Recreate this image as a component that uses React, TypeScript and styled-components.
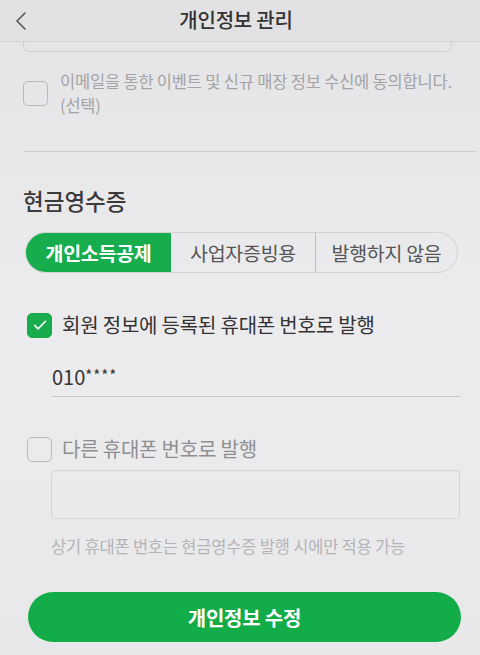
import styled, { createGlobalStyle } from 'styled-components';

const GlobalStyle = createGlobalStyle`
  body {
    margin: 0;
    background: #e7e7e9;
    font-family: 'Noto Sans CJK KR', 'Noto Sans', sans-serif;
  }
`;

const Page = styled.div`
  width: 480px;
  min-height: 655px;
  background: linear-gradient(180deg, #e4e4e6 0%, #e9e9eb 30%, #ececee 55%, #e8e8ea 100%);
  overflow: hidden;
`;

const Header = styled.header`
  height: 42px;
  display: grid;
  grid-template-columns: 44px 1fr 44px;
  align-items: center;
  background: #e2e2e4;
  border-bottom: 1px solid #d3d3d5;
  box-sizing: border-box;
`;

const BackButton = styled.button`
  border: none;
  background: none;
  padding: 0 0 0 14px;
  display: flex;
  align-items: center;
  color: #555;
`;

const Title = styled.h1`
  margin: 0 8px 2px 0;
  text-align: center;
  font-size: 20px;
  line-height: 28px;
  font-weight: 500;
  color: #333;
  letter-spacing: -0.2px;
`;

const Content = styled.main`
  padding: 0 4px 0 23px;
`;

const FieldStub = styled.div`
  height: 9px;
  margin-right: 24px;
  border: 1px solid #cfcfd1;
  border-top: none;
  border-radius: 0 0 6px 6px;
`;

const CheckRow = styled.label<{ $top: number; $indent?: number }>`
  display: flex;
  align-items: center;
  gap: 10px;
  margin-top: ${p => p.$top}px;
  margin-left: ${p => p.$indent ?? 0}px;
`;

const Box = styled.span<{ $checked?: boolean }>`
  flex: none;
  width: 25px;
  height: 25px;
  box-sizing: border-box;
  border-radius: 5px;
  border: 1.5px solid ${p => (p.$checked ? '#17a84a' : '#b9b9bb')};
  background: ${p => (p.$checked ? '#17ad4c' : 'transparent')};
  display: flex;
  align-items: center;
  justify-content: center;
`;

const AgreeText = styled.span`
  font-size: 16.5px;
  line-height: 24px;
  color: #a3a3a5;
  letter-spacing: -0.2px;
  white-space: nowrap;
  margin-left: 2px;
`;

const Divider = styled.hr`
  margin: 34px 0 0;
  border: none;
  border-top: 1px solid #cdcdcf;
`;

const SectionTitle = styled.h2`
  margin: 34px 0 0;
  font-size: 22.5px;
  line-height: 28px;
  font-weight: 500;
  color: #3a3a3a;
`;

const Segment = styled.div`
  margin: 18px 18px 0 2px;
  height: 41px;
  display: grid;
  grid-template-columns: 145px 144px 1fr;
  border: 1px solid #d2d2d4;
  border-radius: 21px;
  overflow: hidden;
  box-sizing: border-box;
`;

const SegmentItem = styled.button<{ $active?: boolean; $divided?: boolean }>`
  border: none;
  border-left: ${p => (p.$divided ? '1px solid #bdbdbf' : 'none')};
  background: ${p => (p.$active ? '#18ad4c' : 'transparent')};
  color: ${p => (p.$active ? '#fff' : '#555')};
  font-family: inherit;
  font-size: 19.5px;
  font-weight: ${p => (p.$active ? 700 : 400)};
  padding: 0 0 1px;
  letter-spacing: -0.3px;
  white-space: nowrap;
`;

const IssueText = styled.span<{ $muted?: boolean }>`
  font-size: 20px;
  line-height: 26px;
  color: ${p => (p.$muted ? '#8e8e90' : '#333')};
  letter-spacing: -0.2px;
  white-space: nowrap;
`;

const Indented = styled.div`
  margin: 0 16px 0 28px;
`;

const PhoneValue = styled.div`
  margin-top: 24px;
  padding: 0 0 6px 1px;
  font-size: 20px;
  line-height: 26px;
  color: #333;
  border-bottom: 1px solid #c9c9cb;

  sup {
    font-size: 15px;
    vertical-align: 4px;
    letter-spacing: 1px;
  }
`;

const PhoneInput = styled.input`
  display: block;
  width: 100%;
  height: 49px;
  margin-top: 8px;
  box-sizing: border-box;
  border: 1px solid #d3d3d5;
  border-radius: 4px;
  background: transparent;
`;

const Helper = styled.p`
  margin: 15px 0 0;
  font-size: 16.5px;
  line-height: 24px;
  color: #b4b4b6;
  letter-spacing: -0.2px;
  white-space: nowrap;
`;

const SubmitButton = styled.button`
  display: block;
  width: 433px;
  height: 50px;
  margin: 34px 0 0 5px;
  border: none;
  border-radius: 25px;
  background: #12ad49;
  color: #fff;
  font-family: inherit;
  font-size: 20px;
  font-weight: 700;
  letter-spacing: -0.2px;
`;

const Check = () => (
  <svg width="16" height="16" viewBox="0 0 16 16" fill="none">
    <path d="M2.5 8.3l3.6 3.6 7.4-7.6" stroke="#fff" strokeWidth="1.6" strokeLinecap="round" strokeLinejoin="round" />
  </svg>
);

export default function App() {
  return (
    <Page>
      <GlobalStyle />
      <Header>
        <BackButton aria-label="뒤로">
          <svg width="14" height="20" viewBox="0 0 14 20" fill="none">
            <path d="M11 2L3 10l8 8" stroke="#555" strokeWidth="1.6" strokeLinecap="round" strokeLinejoin="round" />
          </svg>
        </BackButton>
        <Title>개인정보 관리</Title>
        <span />
      </Header>

      <Content>
        <FieldStub />

        <CheckRow $top={17}>
          <Box />
          <AgreeText>
            이메일을 통한 이벤트 및 신규 매장 정보 수신에 동의합니다.
            <br />
            (선택)
          </AgreeText>
        </CheckRow>

        <Divider />

        <SectionTitle>현금영수증</SectionTitle>

        <Segment>
          <SegmentItem $active>개인소득공제</SegmentItem>
          <SegmentItem>사업자증빙용</SegmentItem>
          <SegmentItem $divided>발행하지 않음</SegmentItem>
        </Segment>

        <CheckRow $top={39} $indent={4}>
          <Box $checked>
            <Check />
          </Box>
          <IssueText>회원 정보에 등록된 휴대폰 번호로 발행</IssueText>
        </CheckRow>

        <Indented>
          <PhoneValue>
            010<sup>****</sup>
          </PhoneValue>
        </Indented>

        <CheckRow $top={39} $indent={4}>
          <Box />
          <IssueText $muted>다른 휴대폰 번호로 발행</IssueText>
        </CheckRow>

        <Indented>
          <PhoneInput />
          <Helper>상기 휴대폰 번호는 현금영수증 발행 시에만 적용 가능</Helper>
        </Indented>

        <SubmitButton>개인정보 수정</SubmitButton>
      </Content>
    </Page>
  );
}
